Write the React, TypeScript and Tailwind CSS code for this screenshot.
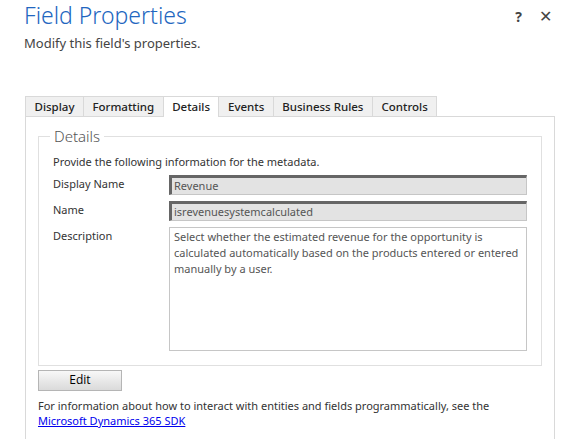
export default function App() {
  const tabs = ["Display", "Formatting", "Details", "Events", "Business Rules", "Controls"];
  const active = "Details";

  return (
    <div className="w-[568px] h-[439px] overflow-hidden bg-white text-[#444] font-['Noto_Sans',sans-serif]">
      <div className="flex justify-between pl-[24px] pr-[16px] pt-[1px]">
        <div>
          <h1 className="text-[23px] leading-[29px] font-light text-[#2266c0]">Field Properties</h1>
          <p className="text-[13px] leading-[18px] mt-[4px] text-[#444]">Modify this field's properties.</p>
        </div>
        <div className="flex gap-[17px] pt-[5px] text-[14px] font-bold text-[#444]">
          <span>?</span>
          <span className="text-[16px] leading-[20px] font-normal">✕</span>
        </div>
      </div>

      <div className="ml-[25px] mt-[44px] w-[530px]">
        <div className="flex h-[21px]">
          {tabs.map((t) => (
            <div
              key={t}
              className={
                t === active
                  ? "px-[8.5px] h-[21px] text-[11.5px] leading-[20px] font-medium text-[#222] bg-white border border-b-0 border-[#d9d9d9] -ml-px relative z-10 pb-px"
                  : "px-[8.5px] h-[21px] text-[11.5px] leading-[20px] font-medium text-[#222] bg-[#f0f0f0] border border-[#d9d9d9] -ml-px first:ml-0"
              }
            >
              {t}
            </div>
          ))}
          <div className="flex-1 border-b border-[#d9d9d9]"></div>
        </div>
        <div className="border border-t-0 border-[#d9d9d9] h-[330px] px-[12px] pt-[10px]">
          <fieldset className="border border-[#e0e0e0] px-[14px] pb-[14px]">
            <legend className="px-[4px] -ml-[3px] text-[15px] leading-[18px] font-light text-[#555]">Details</legend>
            <p className="text-[11px] leading-[14px] mt-[10px] mb-[6px] text-[#333]">Provide the following information for the metadata.</p>
            <div className="grid grid-cols-[116px_1fr] gap-y-[6px] text-[11px] text-[#333]">
              <div className="leading-[18px]">Display Name</div>
              <div className="h-[20px] bg-[#e3e3e3] border-t-[3px] border-l-[3px] border-r border-b border-t-[#666] border-l-[#666] border-r-[#c6c6c6] border-b-[#c6c6c6] px-[2px] leading-[15px] text-[#555]">Revenue</div>
              <div className="leading-[18px]">Name</div>
              <div className="h-[20px] bg-[#e3e3e3] border-t-[3px] border-l-[3px] border-r border-b border-t-[#666] border-l-[#666] border-r-[#c6c6c6] border-b-[#c6c6c6] px-[2px] leading-[15px] text-[#555]">isrevenuesystemcalculated</div>
              <div className="leading-[18px]">Description</div>
              <div className="h-[124px] border border-[#c6c6c6] px-[4px] py-[1px] leading-[16px] text-[#555]">
                Select whether the estimated revenue for the opportunity is calculated automatically based on the products entered or entered manually by a user.
              </div>
            </div>
          </fieldset>
          <button className="mt-[2px] w-[84px] h-[21px] border border-[#b5b5b5] bg-gradient-to-b from-[#f8f8f8] to-[#dadada] text-[12px] text-black font-['Open_Sans',sans-serif]">Edit</button>
          <p className="mt-[7px] text-[11px] leading-[15px] text-[#333]">
            For information about how to interact with entities and fields programmatically, see the
            <br />
            <a className="text-[#0000ee] underline" href="#">Microsoft Dynamics 365 SDK</a>
          </p>
        </div>
      </div>
    </div>
  );
}
